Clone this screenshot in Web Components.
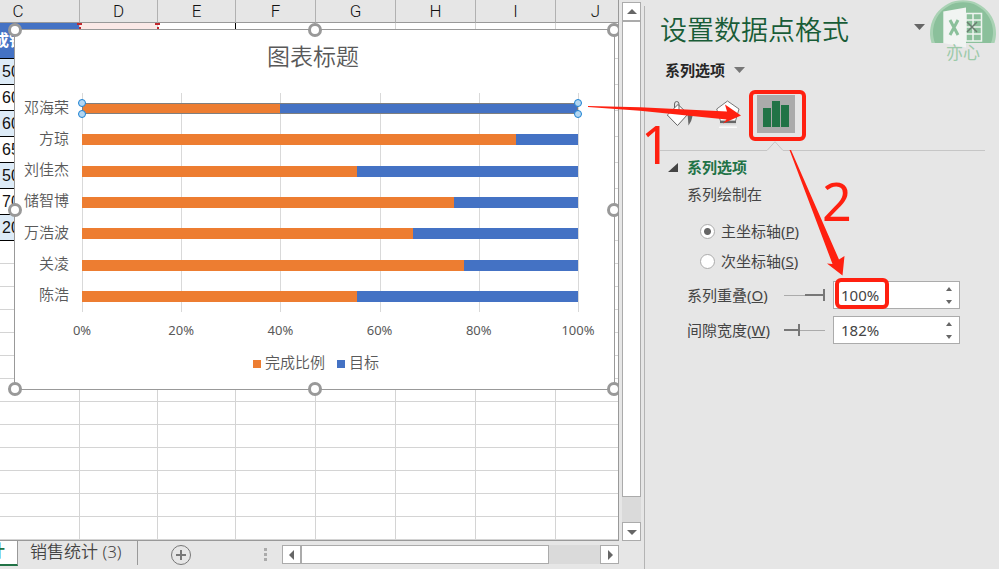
<!DOCTYPE html>
<html lang="zh-CN">
<head>
<meta charset="utf-8">
<title>销售统计</title>
<style>
  html, body {
    margin: 0;
    height: 100%;
  }

  body {
    background-color: #e6e6e6;
    color: #444;
    font-family: "Noto Sans", "Noto Sans CJK SC", sans-serif;
    font-size: 15px;
    line-height: 20px;
    overflow: hidden;
  }
</style>
</head>
<body>
<excel-app></excel-app>

<script>
const sheetStyles = `
    <style>
        :host {
            display: block;
            position: relative;
            flex: 1;
            min-width: 0;
            overflow: hidden;
            background-color: #fff;
            border-right: 1px solid #999;
            border-bottom: 1px solid #999;
        }

        table {
            table-layout: fixed;
            width: 679px;
            margin-left: -43px;
            border-collapse: separate;
            border-spacing: 0;
            color: #111;
            font-family: "Liberation Sans", "Noto Sans CJK SC", sans-serif;
        }

        th, td {
            box-sizing: border-box;
            padding: 0;
            border-right: 1px solid #d4d4d4;
            border-bottom: 1px solid #d4d4d4;
            line-height: 20px;
            text-align: left;
        }

        .wide { width: 123px; }
        .small { width: 78px; }
        .medium { width: 80px; }

        thead th {
            height: 23px;
            background-color: #e6e6e6;
            border-right-color: #b1b1b1;
            border-bottom-color: #999;
            font-family: Roboto, sans-serif;
            font-size: 17px;
            font-weight: 300;
            text-align: center;
        }

        .title-row td { height: 36px; }
        .data-row td { height: 26px; }
        .blank-row td { height: 23px; }

        .title-row .key {
            padding-left: 36px;
            background-color: #4472c4;
            color: #fff;
            font-size: 16px;
            font-weight: bold;
            border-bottom-color: #000;
        }

        .data-row .key {
            padding-left: 45px;
            font-size: 16px;
            border-bottom-color: #000;
        }

        .data-row:nth-child(even) .key {
            background-color: #ddebf7;
        }

        .title-row .range {
            position: relative;
            background-color: #fbe9e7;
        }

        .range::before, .range::after {
            content: "";
            position: absolute;
            top: 0;
            width: 5px;
            height: 5px;
            border-top: 2px solid #c1272d;
            background: linear-gradient(#c1272d, #c1272d) 50% 100% / 2px 3px no-repeat;
        }

        .range::before { left: -3px; }
        .range::after { right: -3px; }
        .title-row .edge { border-right-color: #000; }
    </style>
`;

class SheetGrid extends HTMLElement {
  constructor() {
    super();
    this.root = this.attachShadow({ mode: 'open' });
    this.renderHTML();
  }

  renderHTML() {
    const letters = ['C', 'D', 'E', 'F', 'G', 'H', 'I', 'J'];
    const sizes = ['wide', 'small', 'small', 'medium', 'medium', 'medium', 'medium', 'medium'];
    const values = [50, 60, 60, 65, 50, 70, 20];
    const blanks = (count) => '<td></td>'.repeat(count);

    this.root.innerHTML = `
        ${sheetStyles}
        <table>
            <colgroup>${sizes.map((size) => `<col class="${size}">`).join('')}</colgroup>
            <thead>
                <tr>${letters.map((letter) => `<th scope="col">${letter}</th>`).join('')}</tr>
            </thead>
            <tbody>
                <tr class="title-row">
                    <td class="key">成销</td><td class="range"></td><td class="edge"></td>${blanks(5)}
                </tr>
                ${values.map((value) => `<tr class="data-row"><td class="key">${value}</td>${blanks(7)}</tr>`).join('')}
                ${`<tr class="blank-row">${blanks(8)}</tr>`.repeat(13)}
            </tbody>
        </table>
        <slot></slot>
    `;
  }
}

customElements.define('sheet-grid', SheetGrid);

const chartStyles = `
    <style>
        :host {
            display: block;
            position: absolute;
            left: 14px;
            right: 3px;
            top: 29px;
            box-sizing: border-box;
            padding: 10px 36px 17px 0;
            background-color: #fff;
            border: 1px solid #999;
            color: #595959;
        }

        h2 {
            margin: 0 0 21px;
            padding-left: 33px;
            font-size: 23px;
            line-height: 32px;
            font-weight: 350;
            text-align: center;
        }

        .chart {
            display: grid;
            grid-template-columns: 54px 1fr;
            column-gap: 13px;
        }

        .names, .bars {
            display: flex;
            flex-direction: column;
            height: 219px;
        }

        .names span, .row {
            flex: 1;
            display: flex;
            align-items: center;
        }

        .names span {
            justify-content: flex-end;
            font-weight: 350;
            padding-bottom: 4px;
        }

        .bars {
            background-image: repeating-linear-gradient(to right, #d9d9d9 0 1px, transparent 1px 20%);
            border-right: 1px solid #d9d9d9;
            margin-right: -1px;
        }

        .bar {
            position: relative;
            flex: 1;
            display: flex;
            height: 11px;
            background-color: #4472c4;
        }

        .done {
            background-color: #ed7d31;
        }

        .bar.selected {
            outline: 1px solid #7f7f7f;
            outline-offset: -1px;
        }

        .selected .done {
            margin: 1px 0;
        }

        .dot {
            position: absolute;
            box-sizing: border-box;
            width: 8px;
            height: 8px;
            margin: -4px;
            border: 1px solid #1d82d2;
            border-radius: 50%;
            background-color: #b3d6f2;
        }

        .axis {
            grid-column: 2;
            display: flex;
            justify-content: space-between;
            margin-top: 8px;
            font-size: 13px;
        }

        .axis span {
            display: flex;
            justify-content: center;
            width: 0;
        }

        .legend {
            display: flex;
            justify-content: center;
            gap: 12px;
            margin-top: 12px;
            padding-left: 39px;
            font-weight: 350;
        }

        .legend span {
            display: flex;
            align-items: center;
            gap: 4px;
        }

        .legend span::before {
            content: "";
            width: 8px;
            height: 8px;
            margin-top: 3px;
            background-color: #4472c4;
        }

        .legend .rate::before {
            background-color: #ed7d31;
        }

        .handle {
            position: absolute;
            box-sizing: border-box;
            width: 14px;
            height: 14px;
            margin: -7px;
            border: 3px solid #999;
            border-radius: 50%;
            background-color: #fff;
        }
    </style>
`;

class BarChart extends HTMLElement {
  constructor() {
    super();
    this.root = this.attachShadow({ mode: 'open' });
    this.renderHTML();
  }

  renderHTML() {
    const people = [
      ['邓海荣', 40],
      ['方琼', 87.5],
      ['刘佳杰', 55.5],
      ['储智博', 75],
      ['万浩波', 66.7],
      ['关凌', 77],
      ['陈浩', 55.5],
    ];
    const ends = [[0, 0], [100, 0], [0, 100], [100, 100]];
    const handles = [[0, 0], [50, 0], [100, 0], [0, 50], [100, 50], [0, 100], [50, 100], [100, 100]];
    const place = (name) => ([x, y]) => `<i class="${name}" style="left:${x}%;top:${y}%"></i>`;

    const rows = people
      .map(([, rate], index) => `
        <div class="row">
            <div class="bar ${index === 0 ? 'selected' : ''}">
                <div class="done" style="width:${rate}%"></div>
                ${index === 0 ? ends.map(place('dot')).join('') : ''}
            </div>
        </div>`)
      .join('');

    this.root.innerHTML = `
        ${chartStyles}
        <h2>图表标题</h2>
        <div class="chart">
            <div class="names">${people.map(([name]) => `<span>${name}</span>`).join('')}</div>
            <div class="bars">${rows}</div>
            <div class="axis">${[0, 20, 40, 60, 80, 100].map((n) => `<span>${n}%</span>`).join('')}</div>
        </div>
        <div class="legend">
            <span class="rate">完成比例</span>
            <span>目标</span>
        </div>
        ${handles.map(place('handle')).join('')}
    `;
  }
}

customElements.define('bar-chart', BarChart);

const scrollStyles = `
    <style>
        :host {
            display: flex;
            background-color: #dadada;
        }

        :host([direction="vertical"]) {
            flex-direction: column;
        }

        button, .thumb {
            box-sizing: border-box;
            border: 1px solid #ababab;
            background-color: #fff;
        }

        button {
            display: flex;
            align-items: center;
            justify-content: center;
            flex: none;
            width: 19px;
            height: 19px;
            padding: 0;
        }

        .track {
            flex: 1;
            display: flex;
            flex-direction: inherit;
        }

        svg { fill: #666; }
    </style>
`;

class ScrollBar extends HTMLElement {
  constructor() {
    super();
    this.root = this.attachShadow({ mode: 'open' });
  }

  connectedCallback() {
    const vertical = this.getAttribute('direction') === 'vertical';
    const back = vertical ? 'M0 7 5 2l5 5z' : 'M7 0v10L2 5z';
    const next = vertical ? 'M0 3h10L5 8z' : 'M3 0l5 5-5 5z';
    const icon = (path) => `<svg width="10" height="10"><path d="${path}"/></svg>`;

    this.root.innerHTML = `
        ${scrollStyles}
        <button aria-label="${vertical ? '向上' : '向左'}">${icon(back)}</button>
        <div class="track"><div class="thumb" style="flex:0 0 ${this.getAttribute('size')}"></div></div>
        <button aria-label="${vertical ? '向下' : '向右'}">${icon(next)}</button>
    `;
  }
}

customElements.define('scroll-bar', ScrollBar);

const tabStyles = `
    <style>
        :host {
            display: flex;
            height: 28px;
            color: #444;
        }

        button {
            border: 0;
            padding: 0;
            background: none;
            color: inherit;
            font: inherit;
        }

        .tab {
            box-sizing: border-box;
            height: 24px;
            padding: 0 15px 3px 12px;
            border-right: 1px solid #999;
            font-size: 17px;
            line-height: 20px;
            white-space: nowrap;
            font-weight: 350;
        }

        .tab.active {
            display: flex;
            justify-content: flex-end;
            width: 18px;
            padding: 0 12px 0 0;
            overflow: hidden;
            height: 25px;
            background-color: #fff;
            border-bottom: 2px solid #217346;
            color: #217346;
            font-weight: 500;
        }

        .add {
            display: flex;
            margin: 3px 0 0 32px;
            height: 22px;
        }

        .grip {
            display: flex;
            flex-direction: column;
            gap: 2px;
            margin: 7px 15px 0 auto;
        }

        .grip i {
            width: 3px;
            height: 3px;
            background-color: #ababab;
        }

        scroll-bar {
            width: 337px;
            height: 19px;
            margin: 4px 25px 0 0;
        }
    </style>
`;

class SheetTabs extends HTMLElement {
  constructor() {
    super();
    this.root = this.attachShadow({ mode: 'open' });
    this.root.innerHTML = `
        ${tabStyles}
        <button class="tab active">计</button>
        <button class="tab">销售统计 (3)</button>
        <button class="add" aria-label="新工作表">
            <svg width="22" height="22" fill="none" stroke="#777">
                <circle cx="11" cy="11" r="9.5"/>
                <path d="M6 11h10M11 6v10" stroke-width="2"/>
            </svg>
        </button>
        <div class="grip"><i></i><i></i><i></i></div>
        <scroll-bar direction="horizontal" size="83%"></scroll-bar>
    `;
  }
}

customElements.define('sheet-tabs', SheetTabs);

const spinStyles = `
    <style>
        :host {
            display: grid;
            grid-template-columns: 97px 41px minmax(0, 1fr);
            align-items: center;
        }

        label {
            padding-bottom: 1px;
            white-space: nowrap;
        }

        .slider {
            appearance: none;
            width: 41px;
            height: 14px;
            margin: 0;
            background:
                linear-gradient(#777, #777) var(--from) 50% / var(--fill) 2px no-repeat,
                linear-gradient(#ababab, #ababab) 0 50% / 100% 1px no-repeat;
        }

        .slider::-webkit-slider-thumb {
            appearance: none;
            width: 2px;
            height: 12px;
            background-color: #777;
        }

        .box {
            display: flex;
            box-sizing: border-box;
            height: 28px;
            margin-left: 8px;
            background-color: #fff;
            border: 1px solid #ababab;
        }

        .value {
            flex: 1;
            min-width: 0;
            padding: 0 0 1px 7px;
            border: 0;
            background: none;
            color: #444;
            font: inherit;
        }

        .steps {
            display: flex;
            flex-direction: column;
            width: 20px;
        }

        button {
            flex: 1;
            display: flex;
            align-items: center;
            justify-content: center;
            padding: 0;
            border: 0;
            background: none;
        }

        svg { fill: #666; }
    </style>
`;

class SliderField extends HTMLElement {
  constructor() {
    super();
    this.root = this.attachShadow({ mode: 'open' });
  }

  connectedCallback() {
    const get = (name) => this.getAttribute(name);
    this.root.innerHTML = `
        ${spinStyles}
        <label for="value">${get('label')}(<u>${get('key')}</u>)</label>
        <input class="slider" type="range" aria-label="${get('label')}"
            min="${get('min')}" max="${get('max')}" value="${get('value')}"
            style="--from:${get('from')};--fill:${get('fill')}">
        <div class="box">
            <input class="value" id="value" type="text" value="${get('value')}%">
            <div class="steps">
                <button aria-label="增加"><svg width="6" height="4"><path d="M0 4l3-4 3 4z"/></svg></button>
                <button aria-label="减少"><svg width="6" height="4"><path d="M0 0h6L3 4z"/></svg></button>
            </div>
        </div>
    `;
  }
}

customElements.define('slider-field', SliderField);

const paneStyles = `
    <style>
        :host {
            display: block;
            flex: none;
            box-sizing: border-box;
            width: 355px;
            margin-top: 6px;
            padding: 0 14px 0 15px;
            border-left: 1px solid #b4b4b4;
        }

        button {
            display: flex;
            align-items: center;
            padding: 0;
            border: 0;
            background: none;
            color: inherit;
            font: inherit;
        }

        header {
            display: flex;
            align-items: center;
            height: 48px;
        }

        h1 {
            flex: 1;
            margin: 0;
            color: #185c37;
            font-size: 27px;
            line-height: 36px;
            font-weight: 350;
        }

        header button {
            margin: 0 7px 6px 0;
            width: 12px;
        }

        .close {
            position: relative;
            z-index: 2;
            margin-left: 33px;
        }

        .kind {
            gap: 9px;
            margin: 6px 0 0 5px;
            color: #262626;
            font-weight: bold;
        }

        .icons {
            display: flex;
            align-items: center;
            height: 38px;
            margin: 15px 0 8px 6px;
        }

        .icons button + button { margin-left: 23px; }

        .icons .chosen {
            justify-content: center;
            width: 38px;
            height: 38px;
            background-color: #ababab;
        }

        .icons button.chosen { margin-left: 17px; }

        .divider {
            display: flex;
            align-items: flex-end;
            height: 10px;
        }

        .divider::before, .divider::after {
            content: "";
            width: 107px;
            height: 1px;
            background-color: #c6c6c6;
        }

        .divider::after {
            flex: 1;
        }

        h3 {
            display: flex;
            align-items: center;
            gap: 9px;
            margin: 6px 0 7px 8px;
            color: #217346;
            font-size: 15px;
            line-height: 20px;
        }

        .options {
            display: flex;
            flex-direction: column;
            margin: 0 25px 0 27px;
        }

        fieldset {
            margin: 0;
            padding: 0 0 0 13px;
            border: 0;
        }

        legend {
            margin: 0 0 12px -13px;
            padding: 0;
            line-height: 20px;
        }

        fieldset label {
            display: flex;
            align-items: center;
            gap: 6px;
            height: 30px;
        }

        input[type="radio"] {
            appearance: none;
            box-sizing: border-box;
            width: 15px;
            height: 15px;
            margin: 0;
            border: 1px solid #ababab;
            border-radius: 50%;
            background-color: #fff;
        }

        input[type="radio"]:checked {
            background-image: radial-gradient(circle, #666 3px, transparent 4px);
        }

        slider-field { margin-top: 7px; }
        fieldset + slider-field { margin-top: 5px; }
    </style>
`;

class FormatPane extends HTMLElement {
  constructor() {
    super();
    this.root = this.attachShadow({ mode: 'open' });
    this.root.innerHTML = `
        ${paneStyles}
        <header>
            <h1>设置数据点格式</h1>
            <button aria-label="任务窗格选项">
                <svg width="11" height="6" fill="#666"><path d="M0 0h11L5.500 6z"/></svg>
            </button>
            <button class="close" aria-label="关闭">
                <svg width="12" height="12" stroke="#6a7d70" stroke-width="1.500"><path d="M1 1l10 10M11 1L1 11"/></svg>
            </button>
        </header>
        <button class="kind">系列选项
            <svg width="11" height="6" fill="#777"><path d="M0 0h11L5.500 6z"/></svg>
        </button>
        <div class="icons">
            <button aria-label="填充与线条">
                <svg width="27" height="28" fill="none" stroke="#666">
                    <path d="M1.300 15 12 4.500 22 14 11.500 25.500z" fill="#fff"/>
                    <path d="M8.500 8V4q0-2.500 2.200-2.500T13 4v9"/>
                    <path d="M21.500 13.500l5.200 2q-1 6-4.200 10z" fill="#666" stroke="none"/>
                </svg>
            </button>
            <button aria-label="效果">
                <svg width="24" height="28" fill="none">
                    <defs>
                        <linearGradient id="fade" x2="0" y2="1">
                            <stop stop-color="#ccc"/><stop offset="1" stop-color="#fff"/>
                        </linearGradient>
                    </defs>
                    <path d="M11.500 1 23 9l-3.500 12h-15L.700 9z" fill="#fff" stroke="#777"/>
                    <path d="M4 21h16v2H4z" fill="#666"/>
                    <path d="M4 23h16l1 5H3z" fill="url(#fade)"/>
                </svg>
            </button>
            <button class="chosen" aria-label="系列选项">
                <svg width="26" height="26" fill="#217346"><path d="M0 7h8v19H0zM9 0h8v26H9zM18 4h8v22h-8z"/></svg>
            </button>
        </div>
        <div class="divider">
            <svg width="16" height="10" fill="none" stroke="#c6c6c6"><path d="M0 9.500 8 .700l8 8.800"/></svg>
        </div>
        <h3><svg width="10" height="9" fill="#444"><path d="M10 0v9H0z"/></svg>系列选项</h3>
        <div class="options">
            <fieldset>
                <legend>系列绘制在</legend>
                <label><input type="radio" name="axis" checked><span>主坐标轴(<u>P</u>)</span></label>
                <label><input type="radio" name="axis"><span>次坐标轴(<u>S</u>)</span></label>
            </fieldset>
            <slider-field label="系列重叠" key="O" min="-100" max="100" value="100" from="100%" fill="50%"></slider-field>
            <slider-field label="间隙宽度" key="W" min="0" max="500" value="182" from="0%" fill="36%"></slider-field>
        </div>
    `;
  }
}

customElements.define('format-pane', FormatPane);

const badgeStyles = `
    <style>
        :host {
            display: flex;
            flex-direction: column;
            align-items: center;
            position: absolute;
            top: 0;
            right: 3px;
            color: #9ccaa9;
            font-size: 17px;
            pointer-events: none;
        }

        span {
            margin-top: -5px;
        }
    </style>
`;

class AuthorBadge extends HTMLElement {
  constructor() {
    super();
    this.root = this.attachShadow({ mode: 'open' });
    this.root.innerHTML = `
        ${badgeStyles}
        <svg width="66" height="48">
            <path d="M1.500 43A33 33 0 1 1 64.500 43z" fill="#a9d2b4"/>
            <path d="M5 43A30 30 0 1 1 61 43z" fill="#8bc09b"/>
            <path d="M36 13.500h15.500v27.500H36z" fill="#8bc09b" stroke="#eef4f0" stroke-width="1.500"/>
            <path d="M36 20h15M36 27h15M36 34h15M43 14v27" stroke="#eef4f0" stroke-width="1.500"/>
            <path d="M13.300 11.500 36 7.500v40L13.300 43z" fill="#f1f4f2"/>
            <path d="M20 20l8 15M28 20l-8 15" stroke="#8bc09b" stroke-width="3"/>
        </svg>
        <span>亦心</span>
    `;
  }
}

customElements.define('author-badge', AuthorBadge);

/* Numbered steps drawn over the sheet and the pane */
const stepStyles = `
    <style>
        :host {
            display: block;
            position: absolute;
            top: 0;
            right: 0;
            z-index: 3;
            pointer-events: none;
        }

        svg {
            display: block;
            fill: #ff2010;
            font-size: 52px;
        }

        rect {
            fill: none;
            stroke: #ff2010;
            stroke-width: 4px;
        }
    </style>
`;

class StepMarks extends HTMLElement {
  constructor() {
    super();
    this.root = this.attachShadow({ mode: 'open' });
    this.root.innerHTML = `
        ${stepStyles}
        <svg width="419" height="320" viewBox="580 0 419 320">
            <rect x="751" y="92" width="53" height="47" rx="4"/>
            <rect x="837" y="280" width="50" height="27" rx="4"/>
            <path d="M588 106 640 107.300 727 111.500 725 104.500 741 115.500 723 123.500 726.500 119.500 640 110.700 588 107z"/>
            <path d="M789.500 150h1.500L839 259.500l5.500-3.500-2 19.500L827 263.500l5.500.500z"/>
            <text x="641" y="164">1</text>
            <text x="822" y="221">2</text>
        </svg>
    `;
  }
}

customElements.define('step-marks', StepMarks);

const appStyles = `
    <style>
        :host {
            display: flex;
            position: relative;
            height: 100vh;
            overflow: hidden;
        }

        .book {
            flex: 1;
            display: flex;
            flex-direction: column;
            min-width: 0;
        }

        .view {
            flex: 1;
            display: flex;
            min-height: 0;
        }

        .view scroll-bar {
            flex: none;
            width: 19px;
            margin: 2px 3px 0;
        }
    </style>
`;

class ExcelApp extends HTMLElement {
  constructor() {
    super();
    this.root = this.attachShadow({ mode: 'open' });
    this.root.innerHTML = `
        ${appStyles}
        <div class="book">
            <div class="view">
                <sheet-grid><bar-chart></bar-chart></sheet-grid>
                <scroll-bar direction="vertical" size="95%"></scroll-bar>
            </div>
            <sheet-tabs></sheet-tabs>
        </div>
        <format-pane></format-pane>
        <author-badge></author-badge>
        <step-marks></step-marks>
    `;
  }
}

customElements.define('excel-app', ExcelApp);
</script>
</body>
</html>
